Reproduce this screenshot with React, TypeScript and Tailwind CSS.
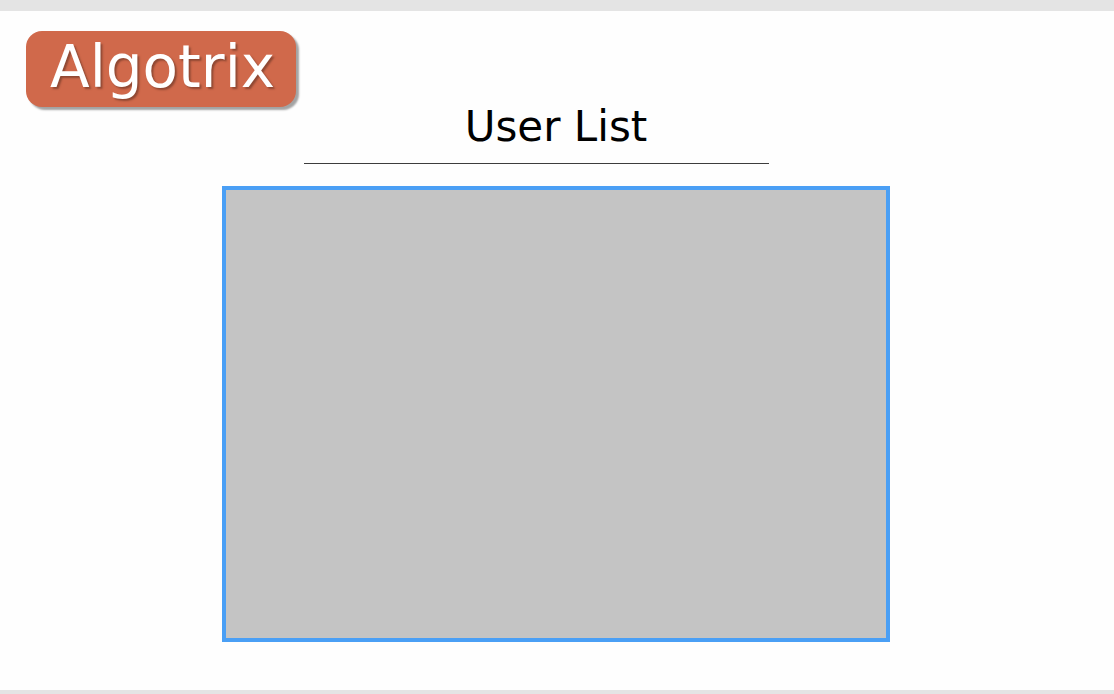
export default function App() {
  return (
    <div className="flex min-h-screen flex-col border-t-[11px] border-b-4 border-[#e4e4e4] bg-[#fefefe] font-['DejaVu_Sans',sans-serif] text-black">
      <header className="flex px-[26px] pt-5">
        <a
          href="#"
          className="flex h-19 items-center rounded-2xl pr-[21px] pb-1 pl-6 text-[58px] leading-none text-white bg-[#d0694b] shadow-[3px_3px_2px_#a3a3a3] [text-shadow:2px_2px_2px_#8f4833]"
        >
          Algotrix
        </a>
      </header>
      <main className="flex grow flex-col pr-[224px] pb-12 pl-[222px]">
        <h1 className="text-center text-[42px] leading-10">User List</h1>
        <hr className="mt-4 mr-[121px] ml-[82px] border-0 border-t border-[#3d3d3d]" />
        <section
          aria-label="User List"
          className="mt-[22px] grow border-4 border-[#4a9ff5] bg-[#c4c4c4]"
        />
      </main>
    </div>
  );
}
